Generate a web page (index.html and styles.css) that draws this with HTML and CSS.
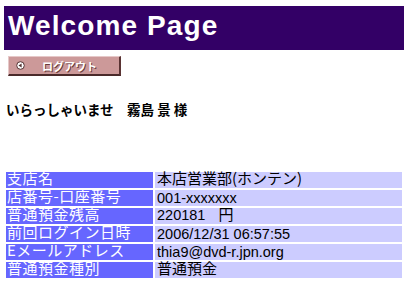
FILE: index.html
```html
<!DOCTYPE html>
<html lang="ja">
<head>
<meta charset="utf-8">
<title>Welcome Page</title>
<link rel="stylesheet" href="styles.css">
</head>
<body>
<h1 class="title">Welcome Page</h1>
<a class="logout" href="#">
  <svg class="logout-icon" width="9" height="9" viewBox="0 0 9 9" aria-hidden="true">
    <circle cx="4.5" cy="4.5" r="3.8" fill="#ffffff" stroke="#553333" stroke-width="1"/>
    <polygon points="2.4,4.5 5.6,2.4 5.6,6.6" fill="#553333"/>
  </svg>
  <span class="logout-text">ログアウト</span>
</a>
<p class="greeting">いらっしゃいませ　霧島 景 様</p>
<div class="info">
  <div class="label">支店名</div><div class="value">本店営業部(ホンテン)</div>
  <div class="label">店番号-口座番号</div><div class="value latin">001-xxxxxxx</div>
  <div class="label">普通預金残高</div><div class="value"><span class="latin amount">220181</span>円</div>
  <div class="label">前回ログイン日時</div><div class="value latin">2006/12/31 06:57:55</div>
  <div class="label">Eメールアドレス</div><div class="value latin">thia9@dvd-r.jpn.org</div>
  <div class="label">普通預金種別</div><div class="value">普通預金</div>
</div>
</body>
</html>
```

FILE: styles.css
```css
html, body {
  background: #ffffff;
}
body {
  margin: 6px 0 0 4px;
  font-family: "Noto Sans CJK JP", "Liberation Sans", sans-serif;
  color: #000000;
}
.title {
  margin: 0;
  height: 44px;
  box-sizing: border-box;
  padding: 0 0 4px 4px;
  background: #330066;
  color: #ffffff;
  font-family: "Liberation Sans", "Noto Sans CJK JP", sans-serif;
  font-weight: bold;
  font-size: 28px;
  line-height: 40px;
  letter-spacing: 1.1px;
}
.logout {
  display: flex;
  align-items: center;
  box-sizing: border-box;
  width: 113px;
  height: 20px;
  margin: 6px 0 0 4px;
  padding-left: 7px;
  background: #cc9999;
  border-top: 1px solid #e6c8c8;
  border-left: 1px solid #e6c8c8;
  border-right: 2px solid #5a3333;
  border-bottom: 2px solid #4a2a2a;
  text-decoration: none;
}
.logout-icon {
  display: block;
  flex: none;
}
.logout-text {
  margin-left: 17px;
  color: #ffffff;
  font-weight: bold;
  font-size: 11px;
  line-height: 12px;
  text-shadow: 1px 1px 0 #6a3a3a;
}
.greeting {
  margin: 25px 0 0 2px;
  font-weight: bold;
  font-size: 13.5px;
  line-height: 16px;
}
.info {
  display: grid;
  grid-template-columns: 147px 1fr;
  grid-auto-rows: 16px;
  gap: 2px;
  padding: 2px;
  margin-top: 53px;
  width: 400px;
  box-sizing: border-box;
}
.label,
.value {
  height: 16px;
  white-space: nowrap;
  overflow: visible;
}
.label {
  padding-left: 1px;
  background: #6666ff;
  color: #ffffff;
  font-size: 15px;
  letter-spacing: 0.5px;
  line-height: 12px;
}
.value {
  padding-left: 2px;
  background: #ccccff;
  color: #000000;
  font-size: 15px;
  line-height: 12px;
}
.latin {
  font-family: "Liberation Sans", sans-serif;
  font-size: 14.5px;
  letter-spacing: 0;
}
.value.latin {
  line-height: 16px;
}
.amount {
  margin-right: 13px;
}
```
